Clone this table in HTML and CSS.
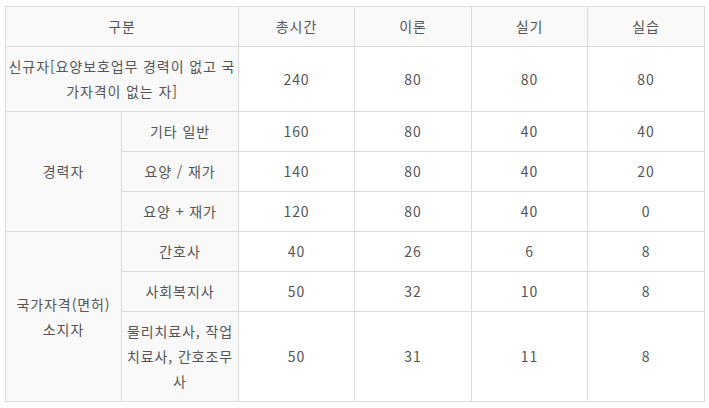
FILE: index.html
```html
<!DOCTYPE html>
<html lang="ko">
<head>
<meta charset="utf-8">
<link rel="stylesheet" href="styles.css">
</head>
<body>
<table class="hours">
  <colgroup>
    <col class="c1"><col class="c2"><col class="c3"><col class="c4"><col class="c5"><col class="c6">
  </colgroup>
  <thead>
    <tr>
      <th colspan="2">구분</th>
      <th>총시간</th>
      <th>이론</th>
      <th>실기</th>
      <th>실습</th>
    </tr>
  </thead>
  <tbody>
    <tr>
      <th colspan="2">신규자[요양보호업무 경력이 없고 국가자격이 없는 자]</th>
      <td>240</td><td>80</td><td>80</td><td>80</td>
    </tr>
    <tr>
      <th rowspan="3">경력자</th>
      <th>기타 일반</th>
      <td>160</td><td>80</td><td>40</td><td>40</td>
    </tr>
    <tr>
      <th>요양 / 재가</th>
      <td>140</td><td>80</td><td>40</td><td>20</td>
    </tr>
    <tr>
      <th>요양 + 재가</th>
      <td>120</td><td>80</td><td>40</td><td>0</td>
    </tr>
    <tr>
      <th rowspan="3" class="keep">국가자격(면허) 소지자</th>
      <th>간호사</th>
      <td>40</td><td>26</td><td>6</td><td>8</td>
    </tr>
    <tr>
      <th>사회복지사</th>
      <td>50</td><td>32</td><td>10</td><td>8</td>
    </tr>
    <tr>
      <th>물리치료사, 작업치료사, 간호조무사</th>
      <td>50</td><td>31</td><td>11</td><td>8</td>
    </tr>
  </tbody>
</table>
</body>
</html>
```

FILE: styles.css
```css
html, body {
  margin: 0;
  padding: 0;
  background: #ffffff;
}

body {
  font-family: "Noto Sans CJK KR", "Noto Sans", sans-serif;
  font-size: 14px;
  letter-spacing: 0.9px;
  color: #555555;
}

.hours {
  margin: 6px 0 0 5px;
  border-collapse: collapse;
  table-layout: fixed;
  width: 699px;
}

.hours .c1 { width: 116px; }
.hours .c2 { width: 117px; }
.hours .c3 { width: 116px; }
.hours .c4 { width: 117px; }
.hours .c5 { width: 116px; }
.hours .c6 { width: 117px; }

.hours th,
.hours td {
  border: 1px solid #dcdcdc;
  padding: 7px 1px;
  line-height: 25px;
  text-align: center;
  vertical-align: middle;
  font-weight: normal;
  word-break: normal;
  line-break: anywhere;
}

.hours th.keep {
  word-break: keep-all;
  line-break: auto;
}

.hours th {
  background: #f9f9f9;
}

.hours td {
  background: #ffffff;
}
```
